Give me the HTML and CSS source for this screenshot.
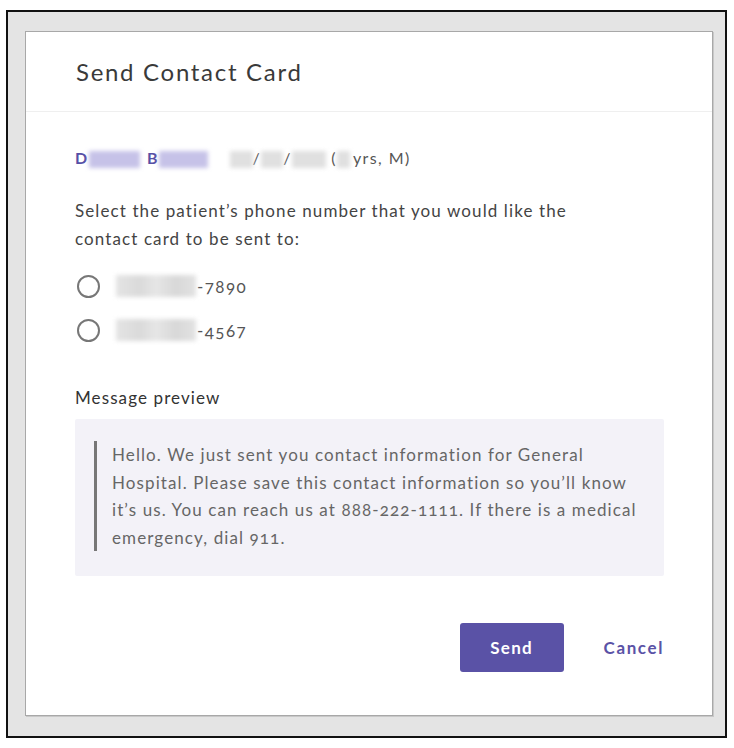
FILE: index.html
```html
<!DOCTYPE html>
<html lang="en">
<head>
	<meta charset="UTF-8">
	<title>Send Contact Card</title>
	<link rel="stylesheet" href="styles.css">
</head>
<body>
	<div id="frame">
		<div id="dialog">
			<div class="header">
				<h1>Send Contact Card</h1>
			</div>
			<div class="body">
				<div class="patient">
					<span class="name">D</span><span class="blur name-blur b1"></span>
					<span class="name">B</span><span class="blur name-blur b2"></span>
					<span class="dob"><span class="blur gray w23"></span>/<span class="blur gray w22"></span>/<span class="blur gray w34"></span> (<span class="blur gray w13"></span>yrs, M)</span>
				</div>
				<p class="prompt">Select the patient’s phone number that you would like the contact card to be sent to:</p>
				<ul class="phones">
					<li><span class="radio"></span><span class="blur phone-blur"></span><span class="num">-7890</span></li>
					<li><span class="radio"></span><span class="blur phone-blur"></span><span class="num">-4567</span></li>
				</ul>
				<div class="label">Message preview</div>
				<div class="preview">
					<blockquote>Hello. We just sent you contact information for General Hospital. Please save this contact information so you’ll know it’s us. You can reach us at 888-222-1111. If there is a medical emergency, dial 911.</blockquote>
				</div>
				<div class="actions">
					<button class="send">Send</button>
					<a class="cancel">Cancel</a>
				</div>
			</div>
		</div>
	</div>
</body>
</html>
```

FILE: styles.css
```css
*{
	margin: 0;
	padding: 0;
	box-sizing: border-box;
}
body{
	background: #fff;
	font-family: "Lato", "Open Sans", sans-serif;
	font-variant-numeric: oldstyle-nums;
	letter-spacing: 1.1px;
	padding: 10px 0 0 6px;
}
ul{
	list-style-type: none;
}
#frame{
	width: 721px;
	height: 728px;
	border: 2px solid #111;
	background: #e4e4e4;
	padding: 19px 0 0 17px;
}
#dialog{
	width: 688px;
	height: 685px;
	background: #fff;
	border: 1px solid #a8a8a8;
	box-shadow: 1px 1px 0 #c8c8c8;
}
.header{
	height: 80px;
	border-bottom: 1px solid #efefef;
	padding: 25px 50px 0 50px;
}
.header h1{
	font-weight: normal;
	font-size: 24px;
	line-height: 30px;
	letter-spacing: 1.7px;
	color: #3a3a3a;
}
.body{
	padding: 34px 49px 0 49px;
	font-size: 17px;
	color: #444;
}
.patient{
	line-height: 24px;
	height: 24px;
	font-size: 16px;
	letter-spacing: 1.4px;
	white-space: nowrap;
}
.name{
	color: #564fa6;
	font-weight: bold;
}
.blur{
	display: inline-block;
	vertical-align: middle;
	height: 17px;
	filter: blur(2px);
}
.name-blur{
	background: #c6c2e8;
}
.b1{
	width: 51px;
	margin-right: 2px;
}
.b2{
	width: 49px;
	margin-right: 16px;
}
.dob{
	color: #555;
}
.gray{
	background: #e0e0e0;
}
.w23{ width: 23px; }
.w22{ width: 22px; }
.w34{ width: 34px; }
.w13{ width: 13px; margin-right: 3px; }
.prompt{
	margin-top: 27px;
	line-height: 28px;
	width: 530px;
	color: #444;
}
.phones{
	margin-top: 18px;
}
.phones li{
	display: flex;
	align-items: center;
	height: 30px;
	margin-bottom: 14px;
	color: #555;
	letter-spacing: 1.4px;
}
.radio{
	width: 23px;
	height: 23px;
	border: 2px solid #777;
	border-radius: 50%;
	margin: 0 16px 0 2px;
}
.phone-blur{
	width: 80px;
	height: 22px;
	background: linear-gradient(90deg, #e4e4e4 0%, #dadada 30%, #e6e6e6 50%, #d8d8d8 75%, #e2e2e2 100%);
	filter: blur(2px);
	margin-right: 1px;
}
.label{
	margin-top: 41px;
	line-height: 24px;
	color: #333;
}
.preview{
	margin-top: 9px;
	width: 589px;
	height: 157px;
	background: #f3f2f8;
	border-radius: 2px;
	padding: 22px 20px 0 19px;
}
.preview blockquote{
	border-left: 3px solid #777;
	padding-left: 15px;
	line-height: 27.5px;
	color: #666;
}
.actions{
	margin-top: 47px;
	display: flex;
	justify-content: flex-end;
	align-items: center;
	width: 589px;
}
.send{
	width: 104px;
	height: 49px;
	background: #5a52a6;
	color: #fff;
	border: none;
	border-radius: 3px;
	font-family: inherit;
	font-size: 17px;
	font-weight: bold;
	letter-spacing: 1.3px;
	margin-right: 40px;
}
.cancel{
	color: #5a52a6;
	font-weight: bold;
	font-size: 17px;
	letter-spacing: 1.6px;
	cursor: pointer;
}
```
